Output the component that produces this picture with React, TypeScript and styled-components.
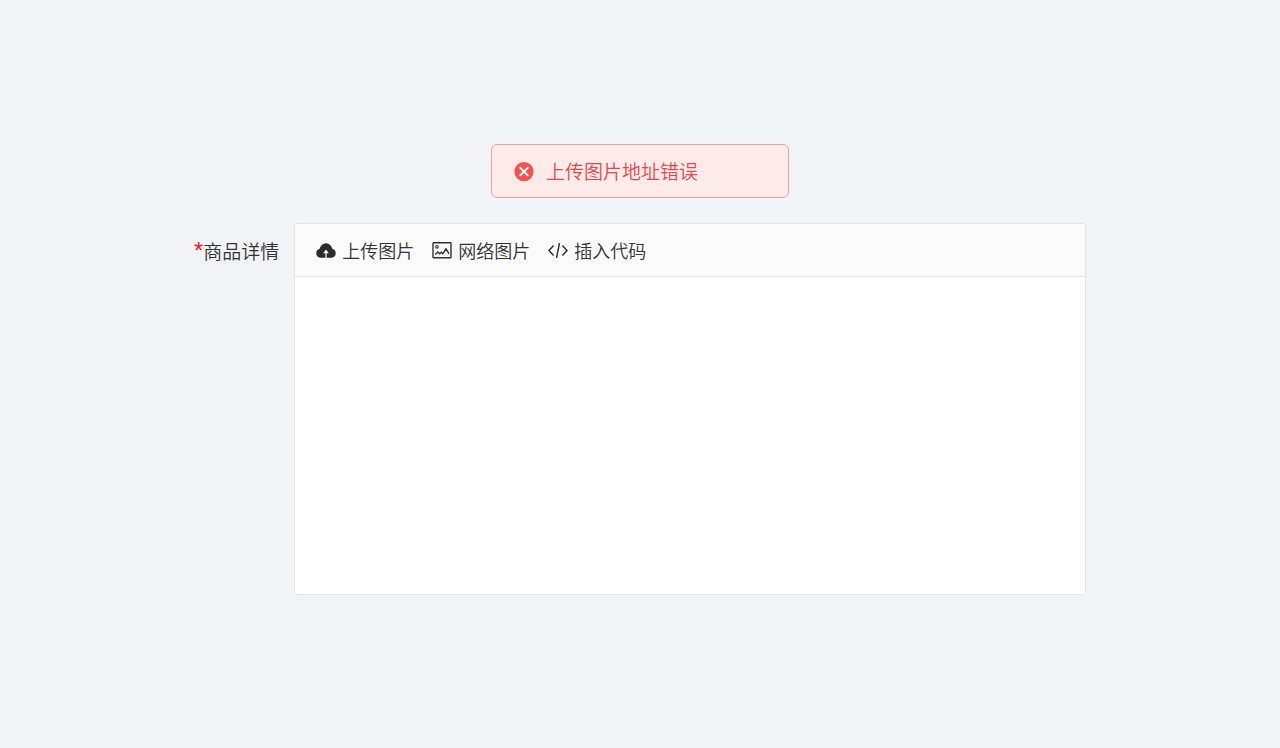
import React from "react";
import styled, { createGlobalStyle } from "styled-components";

const GlobalStyle = createGlobalStyle`
  *, *::before, *::after { box-sizing: border-box; }
  body {
    margin: 0;
    background: #f1f3f7;
    color: #333;
    font-family: "Noto Sans CJK SC", sans-serif;
    font-size: 19px;
    font-weight: 350;
    line-height: 28px;
  }
`;

const Page = styled.main`
  display: flex;
  flex-direction: column;
  align-items: center;
  gap: 25px;
  min-height: 100vh;
  padding: 144px 24px;
`;

const Alert = styled.div`
  display: flex;
  align-items: center;
  gap: 12px;
  width: 298px;
  max-width: 100%;
  padding: 12px 22px;
  border: 1px solid #f4a0a1;
  border-radius: 6px;
  background: #ffeaea;
  color: #e04a4d;
`;

const Form = styled.form`
  display: flex;
  width: 100%;
  max-width: 892px;
`;

const Label = styled.label`
  display: flex;
  flex: 0 0 100px;
  align-self: flex-start;
  justify-content: flex-end;
  padding: 14px 15px 14px 0;
  white-space: nowrap;
`;

const Required = styled.span`
  color: #f01c20;
  font-family: "Liberation Sans", sans-serif;
  font-size: 24px;
`;

const Editor = styled.div`
  display: flex;
  flex: 1;
  flex-direction: column;
  min-width: 0;
  border: 1px solid #e3e4e7;
  border-radius: 3px;
  background: #fff;
  overflow: hidden;
`;

const Toolbar = styled.div`
  display: flex;
  flex-wrap: wrap;
  gap: 18px;
  padding: 12px 21px;
  border-bottom: 1px solid #e3e4e7;
  background: #fafafa;
`;

const ToolButton = styled.button`
  display: flex;
  align-items: center;
  gap: 6px;
  padding: 0;
  border: 0;
  background: none;
  color: inherit;
  font: inherit;
  font-size: 18px;
  cursor: pointer;
`;

const Content = styled.textarea`
  display: block;
  width: 100%;
  height: 317px;
  padding: 12px 21px;
  border: 0;
  outline: 0;
  background: #fff;
  color: inherit;
  font: inherit;
  resize: none;
`;

const Icon = styled.svg.attrs({ viewBox: "0 -2 20 22", "aria-hidden": true })`
  flex: none;
  width: 20px;
  height: 22px;
`;

const ErrorIcon = () => (
  <Icon>
    <circle cx="10" cy="9.6" r="9.6" fill="#ee5650" />
    <path d="M6.2 5.8l7.6 7.6M13.8 5.8l-7.6 7.6" stroke="#fff" strokeWidth="1.8" strokeLinecap="round" />
  </Icon>
);

const CloudIcon = () => (
  <Icon>
    <path
      d="M5 16.8A4.6 4.6 0 0 1 3.6 7.8C4.6 4.4 7 2.2 10 2.2s5.4 2.2 6.4 5.6A4.6 4.6 0 0 1 15 16.8H10.6V12.2H12.8L10 8.6L7.2 12.2H9.4V16.8Z"
      fill="#2d2d2d"
    />
  </Icon>
);

const PictureIcon = () => (
  <Icon fill="none" stroke="#333" strokeWidth="1.4">
    <rect x="1" y="1.8" width="18" height="15" rx="0.6" />
    <circle cx="5" cy="5.8" r="1.3" strokeWidth="1.1" />
    <path d="M3.2 13.6L5.8 10.9L7.6 12.8L9.4 11.2L10.8 12.6L14 7.8L17 12.8" />
  </Icon>
);

const CodeIcon = () => (
  <Icon fill="none" stroke="#333" strokeWidth="1.5">
    <path d="M5.6 4.6L1 9.6L5.6 14.6M14.4 4.6L19 9.6L14.4 14.6M11.5 2.2L8.5 17" />
  </Icon>
);

const tools = [
  { label: "上传图片", Glyph: CloudIcon },
  { label: "网络图片", Glyph: PictureIcon },
  { label: "插入代码", Glyph: CodeIcon },
];

export default function App() {
  return (
    <>
      <GlobalStyle />
      <Page>
        <Alert role="alert">
          <ErrorIcon />
          <span>上传图片地址错误</span>
        </Alert>
        <Form>
          <Label htmlFor="details">
            <Required>*</Required>商品详情
          </Label>
          <Editor>
            <Toolbar role="toolbar" aria-controls="details">
              {tools.map(({ label, Glyph }) => (
                <ToolButton key={label} type="button">
                  <Glyph />
                  {label}
                </ToolButton>
              ))}
            </Toolbar>
            <Content id="details" required />
          </Editor>
        </Form>
      </Page>
    </>
  );
}
